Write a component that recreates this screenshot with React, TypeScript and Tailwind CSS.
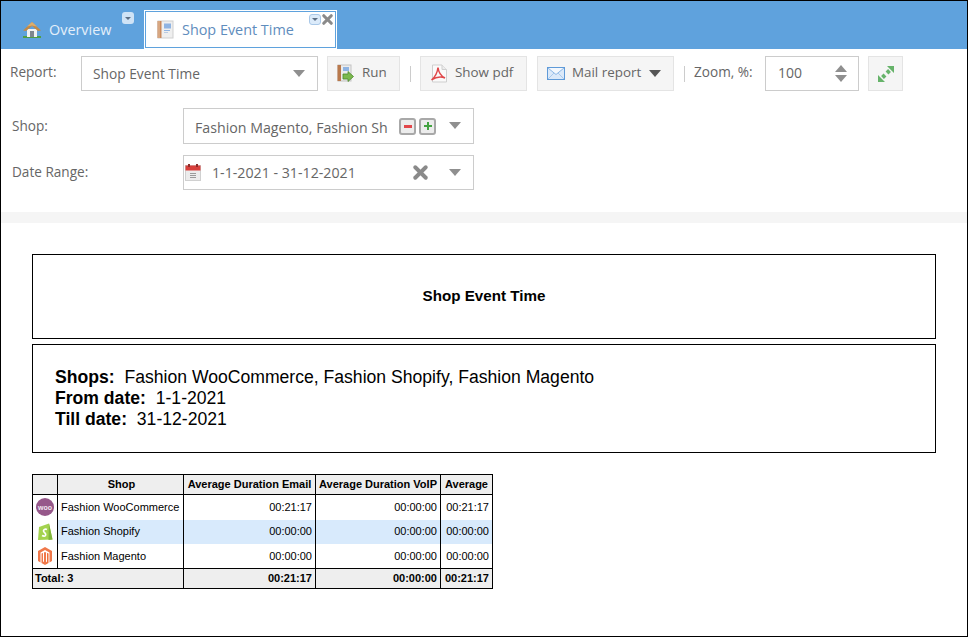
import { ReactNode } from 'react';
import { X } from 'lucide-react';

const rows = [
  { name: 'Fashion WooCommerce', icon: <WooIcon />, email: '00:21:17', voip: '00:00:00', avg: '00:21:17', selected: false, h: 'h-[25px]' },
  { name: 'Fashion Shopify', icon: <ShopifyIcon />, email: '00:00:00', voip: '00:00:00', avg: '00:00:00', selected: true, h: 'h-[24px]' },
  { name: 'Fashion Magento', icon: <MagentoIcon />, email: '00:00:00', voip: '00:00:00', avg: '00:00:00', selected: false, h: 'h-[25px]' },
];

function Caret({ className = 'border-t-[#8f8f8f]' }: { className?: string }) {
  return <span className={`block w-0 h-0 border-x-[6px] border-x-transparent border-t-[7px] ${className}`} />;
}

function MiniMenu({ className = '' }: { className?: string }) {
  return (
    <span className={`absolute flex items-center justify-center rounded-[3px] ${className}`}>
      <span className="block w-0 h-0 border-x-[3px] border-x-transparent border-t-[3px] border-t-[#5c6f85]" />
    </span>
  );
}

function HomeIcon() {
  return (
    <svg width="20" height="16" viewBox="0 0 20 16">
      <rect x="1" y="14" width="18" height="2" fill="#4f9e45" />
      <rect x="5" y="7" width="10" height="8" fill="#f2f2f2" />
      <rect x="8" y="9" width="4" height="6" fill="#7f868e" />
      <path d="M10 0 L19 8.5 L16 9 L10 4 L4 9 L1 8.5 Z" fill="#c08a4a" />
      <path d="M10 0 L15 4.5 L10 3.5 L5 4.5 Z" fill="#dcae6c" />
    </svg>
  );
}

function BookIcon() {
  return (
    <svg width="17" height="19" viewBox="0 0 17 19">
      <rect x="1" y="1" width="15" height="17" fill="#efefef" stroke="#cfcfcf" />
      <rect x="0.5" y="1" width="4" height="17" fill="#c98a5e" />
      <rect x="1.5" y="1" width="1" height="17" fill="#e8c3a4" />
      <rect x="7" y="3.5" width="7" height="5" fill="#8fb4e3" />
      <rect x="7" y="10" width="6" height="1" fill="#8fb4e3" />
      <rect x="7" y="12" width="4" height="1" fill="#b9cbe3" />
    </svg>
  );
}

function RunIcon() {
  return (
    <svg width="17" height="19" viewBox="0 0 17 19">
      <rect x="1" y="1" width="13" height="16" fill="#ececec" stroke="#c4c4c4" />
      <rect x="0.5" y="1" width="3.5" height="16" fill="#b9794c" />
      <rect x="6" y="3" width="6" height="4" fill="#8fb4e3" />
      <path d="M6 10 H11 V7.5 L16.5 12.5 L11 17.5 V15 H6 Z" fill="#7cb94e" stroke="#4d8a2c" strokeWidth="0.8" />
    </svg>
  );
}

function PdfIcon() {
  return (
    <svg width="18" height="19" viewBox="0 0 18 19">
      <path d="M2.5 1 H12 L16.5 5.5 V18 H2.5 Z" fill="#fafafa" stroke="#cfcfcf" />
      <path d="M12 1 V5.5 H16.5" fill="#ececec" stroke="#cfcfcf" />
      <path d="M8 3.5 C7.5 8 5 13 1.5 16 M8 3.5 C8.5 8 11 12 15 14 C11 12.5 6 13 1.5 16" fill="none" stroke="#e0484a" strokeWidth="1.5" />
    </svg>
  );
}

function MailIcon() {
  return (
    <svg width="18" height="13" viewBox="0 0 18 13">
      <rect x="0.5" y="0.5" width="17" height="12" fill="#dbe9f9" stroke="#5f9ad8" />
      <path d="M1 1 L9 7.5 L17 1" fill="#f4f8fd" stroke="#8db8e6" />
      <path d="M1 12 L7 6 M17 12 L11 6" stroke="#a9c9ec" fill="none" />
    </svg>
  );
}

function ExpandIcon() {
  return (
    <svg width="18" height="18" viewBox="0 0 18 18">
      <path d="M10 1 H17 V8 Z M1 10 V17 H8 Z" fill="#66b36a" />
      <path d="M5.5 12.5 L8 10 M10 8 L12.5 5.5" stroke="#66b36a" strokeWidth="4" fill="none" />
    </svg>
  );
}

function CalendarIcon() {
  return (
    <svg width="16" height="17" viewBox="0 0 16 17">
      <rect x="0.5" y="1.5" width="15" height="15" fill="#ececec" stroke="#d0d0d0" />
      <rect x="0.5" y="1.5" width="15" height="5" fill="#d8403c" />
      <rect x="3" y="0" width="2" height="3" fill="#8e2d2a" />
      <rect x="11" y="0" width="2" height="3" fill="#8e2d2a" />
      <rect x="5" y="9" width="6" height="1" fill="#9a9a9a" />
      <rect x="5" y="11" width="6" height="1" fill="#9a9a9a" />
      <rect x="5" y="13" width="6" height="1" fill="#9a9a9a" />
    </svg>
  );
}

function SquareButton({ children }: { children: ReactNode }) {
  return (
    <span className="flex items-center justify-center w-[17px] h-[17px] rounded-[3px] border-2 border-[#a8a8a8] bg-[#ececec]">
      {children}
    </span>
  );
}

function WooIcon() {
  return (
    <svg width="18" height="18" viewBox="0 0 18 18" className="mx-auto">
      <circle cx="9" cy="9" r="9" fill="#96588a" />
      <text x="9" y="11.5" textAnchor="middle" fontSize="7" fontWeight="700" fill="#f3e9f1" fontFamily="Liberation Sans, sans-serif">woo</text>
    </svg>
  );
}

function ShopifyIcon() {
  return (
    <svg width="17" height="19" viewBox="0 0 17 19" className="mx-auto">
      <path d="M2 5 L12 1.5 L15.5 17.5 L1 18 Z" fill="#a4d34f" />
      <path d="M12 1.5 L15.5 17.5 L11.5 18 Z" fill="#7fb53c" />
      <path d="M10 7.5 C8 6.5 5.5 8 7 10 C8.5 11.5 9.5 12 8.5 13.5 C7.5 14.5 6 14 5 13.5" fill="none" stroke="#fff" strokeWidth="1.7" />
    </svg>
  );
}

function MagentoIcon() {
  return (
    <svg width="14" height="18" viewBox="0 0 14 18" className="mx-auto">
      <path d="M7 0 L14 4 V14 L11.5 15.5 V5.5 L7 3 L2.5 5.5 V15.5 L0 14 V4 Z" fill="#f0784a" />
      <path d="M6 5.5 L7 5 L8 5.5 V16.5 L7 18 L3.5 16 V6.5 L5 6 V14.5 L6 15 Z" fill="#f0784a" />
      <path d="M8 5.5 L10.5 6.5 V16 L7 18 L8 15.5 L9 14.5 V6 Z" fill="#f0703a" />
    </svg>
  );
}

function ToolButton({ icon, label, w, caret, gap }: { icon: ReactNode; label: string; w: string; caret?: boolean; gap: string }) {
  return (
    <button className={`flex items-center h-[35px] pl-[9px] ${w} ${gap} border border-[#e4e4e4] bg-[#f5f5f5] text-[13.4px] text-[#666]`}>
      {icon}
      <span className="pb-[2px]">{label}</span>
      {caret && <Caret className="ml-[1px] border-t-[#555]" />}
    </button>
  );
}

export default function App() {
  return (
    <div className="w-[968px] h-[637px] border border-black bg-white overflow-hidden font-['Open_Sans',sans-serif]">
      {/* tab strip */}
      <div className="flex items-end h-[48px] bg-[#5fa2dd]">
        <div className="relative flex items-center w-[143px] h-[38px] pl-[21px] gap-[7px] text-[14.4px] text-[#e4effa]">
          <HomeIcon />
          <span>Overview</span>
          <MiniMenu className="right-[10px] top-[1px] w-[12px] h-[12px] bg-[#cfe3f6]" />
        </div>
        <div className="relative h-[39px] w-[193px] border border-white bg-white">
          <div className="flex items-center h-[37px] pl-[11px] gap-[8px] border border-[#5fa2dd] text-[14.4px] text-[#5f8dbd]">
            <BookIcon />
            <span>Shop Event Time</span>
          </div>
          <MiniMenu className="right-[15px] top-[3px] w-[12px] h-[11px] bg-[#dcebfa] border border-[#a9c8e8]" />
          <X size={15} strokeWidth={5} className="absolute right-[1px] top-[1px] text-[#8a8a8a]" />
        </div>
      </div>

      {/* report toolbar */}
      <div className="flex items-center h-[35px] mt-[7px] pl-[9px] text-[13.6px] text-[#666]">
        <span className="w-[71px] pb-[2px]">Report:</span>
        <div className="flex items-center justify-between w-[237px] h-[35px] pl-[11px] pr-[12px] border border-[#ccc] text-[13.75px]">
          <span className="pt-[1px]">Shop Event Time</span>
          <Caret />
        </div>
        <div className="w-[9px]" />
        <ToolButton icon={<RunIcon />} label="Run" w="w-[73px]" gap="gap-[8px]" />
        <span className="w-px h-[16px] ml-[10px] mr-[9px] bg-[#ccc]" />
        <ToolButton icon={<PdfIcon />} label="Show pdf" w="w-[107px]" gap="gap-[7px]" />
        <div className="w-[10px]" />
        <ToolButton icon={<MailIcon />} label="Mail report" w="w-[137px]" gap="gap-[7px]" caret />
        <span className="w-px h-[16px] ml-[10px] mr-[9px] bg-[#ccc]" />
        <span className="w-[71px] pb-[2px]">Zoom, %:</span>
        <div className="flex items-center justify-between w-[94px] h-[35px] pl-[12px] pr-[11px] border border-[#ccc] text-[14px]">
          <span className="pb-[2px]">100</span>
          <span className="flex flex-col gap-[3px]">
            <span className="block w-0 h-0 border-x-[6px] border-x-transparent border-b-[7px] border-b-[#8f8f8f]" />
            <Caret />
          </span>
        </div>
        <div className="w-[9px]" />
        <button className="flex items-center justify-center w-[35px] h-[35px] border border-[#e4e4e4] bg-[#f5f5f5]">
          <ExpandIcon />
        </button>
      </div>

      {/* filters */}
      <div className="flex items-center h-[36px] mt-[17px] pl-[11px] text-[13.6px] text-[#666]">
        <span className="w-[171px]">Shop:</span>
        <div className="flex items-center w-[291px] h-[36px] pl-[11px] border border-[#ccc]">
          <span className="w-[193px] pt-[4px] overflow-hidden whitespace-nowrap text-[14.2px]">Fashion Magento, Fashion Shopify, Fashion WooCommerce</span>
          <span className="flex gap-[3px] ml-[11px]">
            <SquareButton><span className="block w-[8px] h-[3px] bg-[#e2474b]" /></SquareButton>
            <SquareButton>
              <span className="relative block w-[8px] h-[8px]">
                <span className="absolute left-0 top-[3px] w-[8px] h-[2px] bg-[#43a341]" />
                <span className="absolute left-[3px] top-0 w-[2px] h-[8px] bg-[#43a341]" />
              </span>
            </SquareButton>
          </span>
          <Caret className="ml-[13px] mb-[2px] border-t-[#8f8f8f]" />
        </div>
      </div>
      <div className="flex items-center h-[35px] mt-[11px] pl-[11px] text-[13.6px] text-[#666]">
        <span className="w-[171px]">Date Range:</span>
        <div className="flex items-center w-[291px] h-[35px] border border-[#ccc]">
          <span className="ml-[1px]"><CalendarIcon /></span>
          <span className="ml-[11px] w-[198px] text-[14.2px]">1-1-2021 - 31-12-2021</span>
          <X size={21} strokeWidth={4.5} className="text-[#8a8a8a]" />
          <Caret className="ml-[18px] border-t-[#8f8f8f]" />
        </div>
      </div>

      <div className="h-[11px] mt-[22px] bg-[#f5f5f5]" />

      {/* report body */}
      <div className="pt-[31px] px-[31px] font-['Liberation_Sans',sans-serif] text-black">
        <div className="flex items-center justify-center w-[904px] h-[85px] border border-black text-[15.2px] font-bold">
          Shop Event Time
        </div>
        <div className="w-[904px] h-[109px] mt-[5px] pt-[22px] pl-[22px] border border-black text-[17.6px] leading-[21px]">
          <div><b>Shops:</b>&nbsp; Fashion WooCommerce, Fashion Shopify, Fashion Magento</div>
          <div><b>From date:</b>&nbsp; 1-1-2021</div>
          <div><b>Till date:</b>&nbsp; 31-12-2021</div>
        </div>

        <table className="w-[460px] mt-[21px] table-fixed border-collapse border border-black text-[11px]">
          <colgroup>
            <col className="w-[25px]" />
            <col className="w-[126px]" />
            <col className="w-[132px]" />
            <col className="w-[125px]" />
            <col className="w-[52px]" />
          </colgroup>
          <thead>
            <tr className="h-[20px] bg-[#eee] font-bold">
              <th className="border border-black" />
              <th className="border border-black pl-[2px] font-bold">Shop</th>
              <th className="border border-black font-bold whitespace-nowrap">Average Duration Email</th>
              <th className="border border-black font-bold whitespace-nowrap">Average Duration VoIP</th>
              <th className="border border-black font-bold">Average</th>
            </tr>
          </thead>
          <tbody>
            {rows.map(r => (
              <tr key={r.name} className={`${r.h} ${r.selected ? 'bg-[#d8eafc]' : ''}`}>
                <td className="border-x border-black bg-white p-0">{r.icon}</td>
                <td className="border-x border-black pl-[3px] whitespace-nowrap">{r.name}</td>
                <td className="border-x border-black pr-[3px] text-right">{r.email}</td>
                <td className="border-x border-black pr-[3px] text-right">{r.voip}</td>
                <td className="border-x border-black pr-[3px] text-right">{r.avg}</td>
              </tr>
            ))}
            <tr className="h-[20px] bg-[#eee] font-bold">
              <td colSpan={2} className="border border-black pl-[2px]">Total: 3</td>
              <td className="border border-black pr-[3px] text-right">00:21:17</td>
              <td className="border border-black pr-[3px] text-right">00:00:00</td>
              <td className="border border-black pr-[3px] text-right">00:21:17</td>
            </tr>
          </tbody>
        </table>
      </div>
    </div>
  );
}
